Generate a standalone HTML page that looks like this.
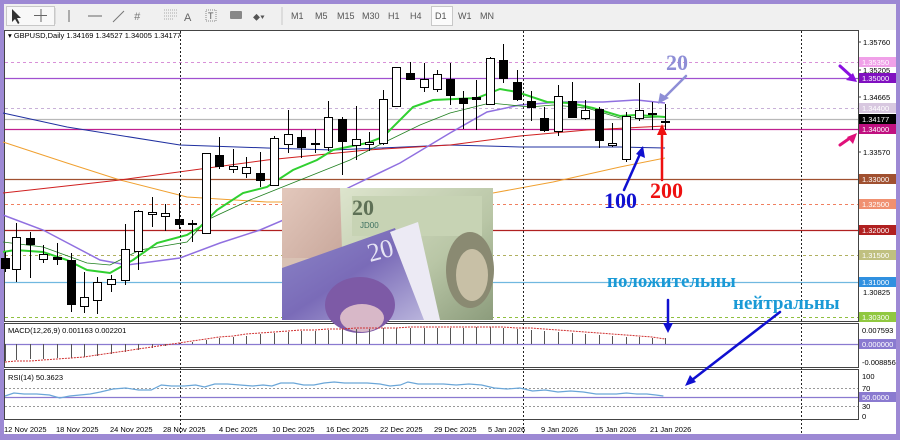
<!DOCTYPE html>
<html><head><meta charset="utf-8"><style>
html,body{margin:0;padding:0;width:900px;height:440px;overflow:hidden;background:#9d89d4;font-family:"Liberation Sans",sans-serif}
svg{position:absolute;left:0;top:0}
</style></head><body>
<svg id="s" width="900" height="440" xmlns="http://www.w3.org/2000/svg" font-family="Liberation Sans, sans-serif">
<defs>
<linearGradient id="gPink" x1="0" y1="0" x2="1" y2="1"><stop offset="0" stop-color="#e3c8bc"/><stop offset="1" stop-color="#c9a89c"/></linearGradient>
<linearGradient id="gUsd" x1="0" y1="0" x2="1" y2="1"><stop offset="0" stop-color="#dfe6cf"/><stop offset=".6" stop-color="#b9c6a6"/><stop offset="1" stop-color="#8c9c7c"/></linearGradient>
<linearGradient id="gGbp" x1="0" y1="0" x2="1" y2="1"><stop offset="0" stop-color="#8c86c8"/><stop offset=".5" stop-color="#7a6bb8"/><stop offset="1" stop-color="#b9b4dc"/></linearGradient>
</defs>
<rect x="0" y="0" width="900" height="440" fill="#9d89d4"/>
<rect x="4" y="4" width="892" height="26" fill="#f0f0f0"/>
<rect x="4" y="30" width="892" height="404" fill="#ffffff"/>
<g stroke="#c8c8c8" fill="none">
<rect x="6.5" y="6.5" width="48" height="19" fill="#f8f8f8"/>
<line x1="55" y1="8" x2="55" y2="24"/><line x1="282" y1="7" x2="282" y2="25"/>
<rect x="431.5" y="6.5" width="21" height="19" fill="#fbfbfb"/>
</g>
<g fill="#555" font-size="9">
<path d="M12 9 L12 22 L15 19 L18 24 L19.5 23 L17 18 L21 18 Z" fill="#333"/>
<path d="M41 9v13M34 15.5h13" stroke="#666" fill="none"/>
<path d="M69 10v12" stroke="#666"/>
<path d="M88 16h14" stroke="#666"/>
<path d="M113 22l11-11" stroke="#777"/>
<text x="134" y="20" font-size="11" fill="#777" font-style="italic">#</text>
<path d="M164 10h14M164 13h14M164 16h14M164 19h10" stroke="#aaa" stroke-dasharray="1,1"/>
<text x="184" y="21" font-size="11" fill="#666">A</text>
<rect x="206" y="10" width="10" height="11" fill="none" stroke="#888" stroke-dasharray="1,1"/><text x="208" y="19" font-size="9" fill="#555">T</text>
<rect x="230" y="11" width="12" height="8" fill="#888" rx="1"/>
<text x="253" y="20" font-size="10" fill="#555">⬥▾</text>
<text x="291" y="19">M1</text><text x="315" y="19">M5</text><text x="337" y="19">M15</text><text x="362" y="19">M30</text>
<text x="388" y="19">H1</text><text x="410" y="19">H4</text><text x="435" y="19">D1</text><text x="458" y="19">W1</text><text x="480" y="19">MN</text>
</g>
<g fill="none" stroke="#444">
<rect x="4.5" y="30.5" width="854" height="291"/>
<rect x="4.5" y="323.5" width="854" height="44"/>
<rect x="4.5" y="369.5" width="854" height="50"/>
</g>
<g id="levels"></g>
<text x="8" y="38" font-size="7.5" fill="#000">▾ GBPUSD,Daily  1.34169 1.34527 1.34005 1.34177</text>
<g id="mas" fill="none"></g>
<g>
<rect x="282" y="188" width="211" height="132" fill="#d9c2b4"/>
<rect x="282" y="188" width="60" height="70" fill="url(#gPink)"/>
<polygon points="340,188 493,188 493,320 330,320 342,250" fill="url(#gUsd)"/>
<path d="M352 196h130v40h-130z" fill="#c7d3b4"/>
<text x="352" y="215" font-size="22" font-family="Liberation Serif,serif" font-weight="bold" fill="#5e7056">20</text>
<text x="360" y="228" font-size="8" fill="#3d7060">JD00</text>
<ellipse cx="470" cy="270" rx="24" ry="38" fill="#8a8a72"/>
<ellipse cx="472" cy="275" rx="16" ry="26" fill="#c8c0a6"/>
<polygon points="282,268 395,228 425,320 282,320" fill="url(#gGbp)"/>
<polygon points="390,232 418,222 440,320 424,320" fill="#eceaf4"/>
<text x="370" y="262" font-size="26" font-family="Liberation Serif,serif" fill="#e6e4f4" transform="rotate(-15 370 262)">20</text>
<ellipse cx="360" cy="305" rx="35" ry="28" fill="#7d5aa6"/>
<ellipse cx="362" cy="318" rx="22" ry="14" fill="#d8b8c8"/>
</g>
<g id="candles"></g>
<g stroke="#222" stroke-dasharray="2,2">
<line x1="180.5" y1="31" x2="180.5" y2="434"/>
<line x1="523.5" y1="31" x2="523.5" y2="434"/>
<line x1="801.5" y1="31" x2="801.5" y2="434"/>
</g>
<g id="axis" font-size="7.5"></g>
<g id="macd"></g>
<text x="8" y="333" font-size="7.5">MACD(12,26,9) 0.001163 0.002201</text>
<g stroke="#999" stroke-dasharray="2,2"><line x1="5" y1="388.5" x2="858" y2="388.5"/><line x1="5" y1="406.5" x2="858" y2="406.5"/></g>
<line x1="5" y1="397.5" x2="858" y2="397.5" stroke="#8a7ad0" stroke-width="1.3"/>
<polyline id="rsi" fill="none" stroke="#6aa6d8" stroke-width="1.2" points=""/>
<text x="8" y="380" font-size="7.5">RSI(14) 50.3623</text>
<g font-size="7.5" fill="#000">
<text x="4" y="432">12 Nov 2025</text><text x="56" y="432">18 Nov 2025</text><text x="110" y="432">24 Nov 2025</text><text x="163" y="432">28 Nov 2025</text>
<text x="219" y="432">4 Dec 2025</text><text x="272" y="432">10 Dec 2025</text><text x="326" y="432">16 Dec 2025</text><text x="380" y="432">22 Dec 2025</text>
<text x="434" y="432">29 Dec 2025</text><text x="488" y="432">5 Jan 2026</text><text x="541" y="432">9 Jan 2026</text><text x="595" y="432">15 Jan 2026</text><text x="650" y="432">21 Jan 2026</text>
</g>
<g font-family="Liberation Serif,serif" font-weight="bold">
<text x="666" y="70" font-size="22" fill="#8e8ed6">20</text>
<text x="604" y="208" font-size="22" fill="#1010d0">100</text>
<text x="650" y="198" font-size="22" fill="#ee1010">200</text>
<text x="607" y="287" font-size="19" fill="#1a9ad6">положительны</text>
<text x="733" y="309" font-size="19" fill="#1a9ad6">нейтральны</text>
</g>
<g stroke-width="2.5" fill="none" stroke-linecap="round">
<path d="M686 76 L664 98" stroke="#8e8ed6"/><path d="M658 104 l2-11 9 5z" fill="#8e8ed6" stroke="none"/>
<path d="M624 190 L640 154" stroke="#1010d0"/><path d="M643 146 l2 12 -9 -4z" fill="#1010d0" stroke="none"/>
<path d="M662 180 L662 132" stroke="#ee1010"/><path d="M662 124 l5 11 -10 0z" fill="#ee1010" stroke="none"/>
<path d="M668 300 L668 326" stroke="#1010d0"/><path d="M668 333 l-5 -10 10 0z" fill="#1010d0" stroke="none"/>
<path d="M780 312 L692 380" stroke="#1010d0"/><path d="M685 386 l5 -11 6 7z" fill="#1010d0" stroke="none"/>
<path d="M840 66 L851 76" stroke="#8a10e0" stroke-width="3"/><path d="M857 82 l-11 -2 7 -7z" fill="#8a10e0" stroke="none"/>
<path d="M840 145 L850 138" stroke="#e0107a" stroke-width="3"/><path d="M857 133 l-4 11 -6 -7z" fill="#e0107a" stroke="none"/>
</g>
</svg>
<script>
var NS="http://www.w3.org/2000/svg";
function el(p,t,a,txt){var e=document.createElementNS(NS,t);for(var k in a)e.setAttribute(k,a[k]);if(txt)e.textContent=txt;p.appendChild(e);return e;}
var L=document.getElementById('levels');
[[62,'#d890d8',1],[78,'#a050d0',0],[108,'#c8b0d8',1],[119,'#b8b8b8',0],[129,'#c02090',0],[179,'#a05030',0],[204,'#f08060',1],[230,'#b02020',0],[255,'#b0b060',1],[282,'#70b8e0',0],[317,'#90c040',1]].forEach(function(l){
 var a={x1:5,x2:858,y1:l[0]+.5,y2:l[0]+.5,stroke:l[1],'stroke-width':l[2]?1:1.2};if(l[2])a['stroke-dasharray']='3,3';el(L,'line',a);});
var M=document.getElementById('mas');
[['#f0a030',1,'3,142 67,163 120,180 187,197 267,202 282,202 493,193 553,182 620,167 665,158'],
 ['#2030a0',1,'3,113 67,127 180,145 267,148 333,150 450,145 520,147 620,147 665,148'],
 ['#d02020',1,'3,193 120,180 267,160 367,150 450,145 520,136 587,130 665,126'],
 ['#9070e0',1.5,'3,215 43,230 100,260 127,265 180,258 220,243 260,230 300,213 350,187 400,163 450,133 487,112 520,105 560,102 603,102 637,100 665,103'],
 ['#208020',0.8,'3,242 43,247 87,263 110,265 140,250 187,242 207,220 250,200 300,180 350,160 383,143 420,125 450,113 490,103 530,107 553,105 587,108 620,118 665,117'],
 ['#30d030',2,'3,252 15,250 43,252 67,260 87,270 110,273 133,260 157,243 187,235 200,227 217,210 243,193 267,187 293,170 317,160 333,150 367,143 383,137 413,107 433,100 477,98 500,89 517,92 547,102 570,103 593,108 620,116 637,115 665,117']
].forEach(function(m){el(M,'polyline',{points:m[2],stroke:m[0],'stroke-width':m[1]});});
var C=document.getElementById('candles');
var cs=[[5,258,268,252,272,1],[16,237,269,223,282,0],[30,238,244,232,278,1],[43,254,259,245,263,0],[57,257,259,243,265,1],[71,260,304,253,312,1],[84,297,306,272,313,0],[97,282,300,277,314,0],[111,279,284,275,292,0],[125,249,280,224,285,0],[138,211,251,210,270,0],[152,212,214,197,227,0],[165,213,216,204,231,0],[179,219,224,193,229,1],[192,223,224,220,242,1],[206,153,233,153,233,0],[219,155,166,137,169,1],[233,166,169,149,173,0],[246,167,173,157,178,0],[260,173,180,152,187,1],[274,138,185,136,186,0],[288,134,144,110,153,0],[301,137,147,130,158,1],[315,143,144,129,153,1],[328,117,147,101,151,0],[342,119,141,117,175,1],[356,139,145,106,160,0],[369,142,144,132,151,0],[383,99,143,90,145,0],[396,67,106,67,107,0],[410,73,79,62,80,1],[424,79,87,63,92,0],[437,74,89,70,92,0],[450,79,95,63,105,1],[463,98,103,91,129,1],[476,97,99,80,130,1],[490,58,104,57,105,0],[503,60,78,44,83,1],[517,82,99,70,101,1],[531,101,107,91,121,1],[544,118,130,107,132,1],[558,96,131,85,136,0],[572,101,117,82,118,1],[585,110,118,100,120,0],[599,109,140,107,148,1],[612,143,145,123,147,0],[626,116,159,112,162,0],[639,110,118,83,121,0],[652,113,114,102,130,1],[665,121,122,104,130,1]];
cs.forEach(function(c){var x=c[0]+.5;el(C,'line',{x1:x,x2:x,y1:c[3],y2:c[4],stroke:'#000'});
 el(C,'rect',{x:x-4,y:c[1]+.5,width:8,height:Math.max(c[2]-c[1],1),fill:c[5]?'#000':'#fff',stroke:'#000','stroke-width':1});});
var A=document.getElementById('axis');
[[42,'1.35760'],[70,'1.35205'],[97,'1.34665'],[152,'1.33570']].forEach(function(t){el(A,'text',{x:863,y:t[0]+3},t[1]);el(A,'line',{x1:858,x2:861,y1:t[0],y2:t[0],stroke:'#444'});});
[[62,'#f0a0e8','#fff','1.35350'],[78,'#8010c0','#fff','1.35000'],[108,'#d8c8e0','#fff','1.34400'],[119,'#000','#fff','1.34177'],[129,'#c01080','#fff','1.34000'],[179,'#a05030','#fff','1.33000'],[204,'#f09070','#fff','1.32500'],[230,'#b02020','#fff','1.32000'],[255,'#c0c080','#fff','1.31500'],[282,'#3090e0','#fff','1.31000'],[317,'#90c840','#fff','1.30300']].forEach(function(t){
 el(A,'rect',{x:859,y:t[0]-5,width:37,height:10,fill:t[1]});el(A,'text',{x:862,y:t[0]+3,fill:t[2]},t[3]);});
el(A,'text',{x:863,y:295},'1.30825');
el(A,'text',{x:862,y:333},'0.007593');el(A,'rect',{x:859,y:339,width:37,height:10,fill:'#8a7ad0'});el(A,'text',{x:862,y:347,fill:'#fff'},'0.000000');
el(A,'text',{x:862,y:365},'-0.008856');
el(A,'text',{x:862,y:379},'100');el(A,'text',{x:862,y:391},'70');el(A,'rect',{x:859,y:392,width:37,height:10,fill:'#8a7ad0'});el(A,'text',{x:862,y:400,fill:'#fff'},'50.0000');
el(A,'text',{x:862,y:409},'30');el(A,'text',{x:862,y:419},'0');
var G=document.getElementById('macd');
el(G,'line',{x1:5,x2:858,y1:344.5,y2:344.5,stroke:'#8a7ad0','stroke-width':1.3});
var hv=[-17,-16,-15,-15,-14,-14,-13,-12,-10,-8,-6,-4,-2,1,2,4,6,7,8,10,11,12,13,13,14,15,15,15,16,16,16,16,16,16,16,17,17,16,15,14,13,12,11,10,9,8,7,7,6,6];
cs.forEach(function(c,i){var v=hv[i];var x=c[0]+.5;el(G,'line',{x1:x,x2:x,y1:344,y2:344-v,stroke:'#555'});});
var sv=[-18,-17,-17,-16,-15,-14,-13,-11,-9,-7,-5,-3,-1,1,3,5,7,8,10,11,12,13,14,14,15,15,16,16,16,16,17,17,17,17,17,17,17,17,16,16,15,14,13,12,11,10,9,8,7,5];
var pts=[];cs.forEach(function(c,i){pts.push(c[0]+','+(344-sv[i]));});
el(G,'polyline',{points:pts.join(' '),fill:'none',stroke:'#d03030','stroke-dasharray':'2,1'});
var r=[[5,396],[12,393],[20,394],[30,394],[40,395],[48,398],[56,396],[64,395],[72,394],[80,392],[90,389],[100,388],[110,390],[120,390],[128,385],[136,386],[146,386],[155,385],[162,387],[170,384],[180,384],[190,385],[200,386],[208,385],[215,386],[222,383],[232,383],[240,385],[248,385],[256,383],[264,382],[272,383],[280,383],[290,383],[300,384],[308,386],[316,385],[322,382],[330,384],[340,384],[350,384],[360,385],[370,384],[380,385],[390,388],[400,389],[410,388],[420,391],[430,390],[440,392],[450,391],[460,392],[470,394],[478,394],[486,394],[494,393],[502,394],[510,394],[517,395],[523,396]];
document.getElementById('rsi').setAttribute('points',r.map(function(p){return (5+(p[0]-5)*1.271).toFixed(1)+','+p[1];}).join(' '));
</script>
</body></html>
